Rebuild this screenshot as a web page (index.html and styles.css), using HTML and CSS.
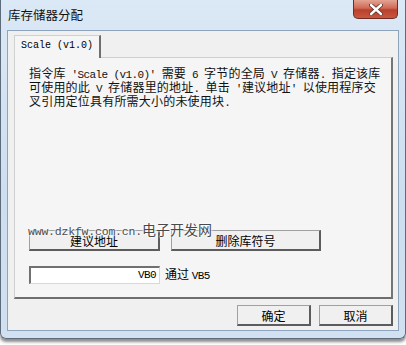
FILE: index.html
```html
<!DOCTYPE html>
<html>
<head>
    <title>库存储器分配</title>
    <link rel="stylesheet" href="styles.css">
</head>
<body>
    <div class="window">
        <div class="titlebar">
            <span class="title">库存储器分配</span>
            <div class="close-btn">
                <svg width="14" height="11" viewBox="0 0 14 11">
                    <path d="M2 1 L12 10 M12 1 L2 10" stroke="#5a2a22" stroke-width="4" stroke-linecap="round"/>
                    <path d="M2 1 L12 10 M12 1 L2 10" stroke="#fff" stroke-width="2.4" stroke-linecap="round"/>
                </svg>
            </div>
        </div>

        <div class="client">
            <div class="tabs">
                <div class="tab active">Scale (v1.0)</div>
            </div>
            <div class="panel">
                <p class="desc">
                    指令库<span class="lat"> 'Scale (v1.0)' </span>需要<span class="lat"> 6 </span>字节的全局<span class="lat"> V </span>存储器<span class="lat">. </span>指定该库<br>
                    可使用的此<span class="lat"> V </span>存储器里的地址<span class="lat">. </span>单击<span class="lat"> '</span>建议地址<span class="lat">' </span>以使用程序交<br>
                    叉引用定位具有所需大小的未使用块<span class="lat">.</span>
                </p>
                <div class="btn-row">
                    <button class="btn suggest">建议地址</button>
                    <button class="btn remove">删除库符号</button>
                </div>
                <div class="range-row">
                    <div class="field">VB0</div>
                    <span class="range-label">通过 <span class="lat">VB5</span></span>
                </div>
            </div>
            <div class="footer">
                <button class="btn footer-btn">确定</button>
                <button class="btn footer-btn">取消</button>
            </div>
        </div>

        <!-- site watermark over the dialog -->
        <div class="watermark"><span class="wm-lat">www.dzkfw.com.cn.</span>电子开发网</div>
    </div>
</body>
</html>
```

FILE: styles.css
```css
html, body {
    margin: 0;
    padding: 0;
    width: 406px;
    height: 345px;
    overflow: hidden;
    background-color: #ffffff;
    font-family: "Noto Sans CJK SC", "Liberation Sans", sans-serif;
    color: #000;
}

.window {
    position: relative;
    box-sizing: border-box;
    width: 406px;
    height: 339px;
    border: 1px solid #5d6b7a;
    border-top: none;
    border-radius: 0 0 6px 6px;
    background: linear-gradient(#dbe8f6, #cddef0 60%, #d2e1f1);
    box-shadow: 0 3px 3px rgba(0, 0, 0, 0.45);
    display: flex;
    flex-direction: column;
}

.titlebar {
    height: 30px;
    flex: none;
    display: flex;
    align-items: center;
    padding-left: 7px;
    box-sizing: border-box;
}

.title {
    font-size: 12.5px;
    line-height: 14px;
    margin-top: -1px;
    color: #111;
}

.close-btn {
    position: absolute;
    top: 0;
    right: 7px;
    width: 45px;
    height: 19px;
    box-sizing: border-box;
    border: 1px solid #6d2c24;
    border-top: none;
    border-radius: 0 0 5px 5px;
    background: linear-gradient(#e3a493, #cf6a55 45%, #b9412d 55%, #c8573f);
    display: flex;
    align-items: center;
    justify-content: center;
}

.client {
    flex: none;
    height: 301px;
    margin: 0 6px;
    box-sizing: border-box;
    border: 1px solid #8ea4bc;
    background-color: #f0f0f0;
    padding: 4px 5px 0 6px;
    display: flex;
    flex-direction: column;
}

.tabs {
    display: flex;
    height: 22px;
}

.tab {
    width: 87px;
    box-sizing: border-box;
    border: 1px solid #d0d0d0;
    border-right: 2px solid #6f6f6f;
    border-bottom: none;
    background-color: #f5f5f5;
    font-family: "Liberation Mono", monospace;
    font-size: 10px;
    line-height: 20px;
    padding-left: 6px;
    position: relative;
    z-index: 1;
    margin-bottom: -1px;
}

.panel {
    height: 242px;
    box-sizing: border-box;
    border: 1px solid #cfcfcf;
    border-right: 2px solid #757575;
    border-bottom: 2px solid #6e6e6e;
    background-color: #f5f5f5;
    padding: 9px 14px 13px 14px;
    display: flex;
    flex-direction: column;
}

.desc {
    margin: 0;
    font-size: 12px;
    line-height: 12px;
    white-space: nowrap;
    letter-spacing: 0.2px;
    color: #111;
}

.lat {
    font-family: "Liberation Mono", monospace;
    font-size: 11px;
    letter-spacing: -0.6px;
}

.btn {
    box-sizing: border-box;
    height: 21px;
    padding: 0;
    border: 1px solid #a0a0a0;
    border-right: 2px solid #5c5c5c;
    border-bottom: 2px solid #5c5c5c;
    background-color: #f0f0f0;
    font-family: "Noto Sans CJK SC", sans-serif;
    font-size: 12px;
    line-height: 17px;
    color: #000;
}

.btn-row {
    margin-top: auto;
    display: flex;
    gap: 11px;
}

.suggest {
    width: 131px;
}

.remove {
    width: 150px;
}

.range-row {
    margin-top: 15px;
    display: flex;
    align-items: center;
    gap: 5px;
    height: 18px;
}

.field {
    width: 131px;
    height: 18px;
    box-sizing: border-box;
    background-color: #fff;
    border: 1px solid #d8d8d8;
    border-top: 2px solid #707070;
    border-left: 2px solid #707070;
    font-family: "Liberation Mono", monospace;
    font-size: 11px;
    letter-spacing: -0.6px;
    line-height: 15px;
    text-align: right;
    padding-right: 3px;
}

.range-label {
    font-size: 12px;
    line-height: 16px;
}

.footer {
    display: flex;
    justify-content: flex-end;
    gap: 8px;
    margin-top: 6px;
}

.footer-btn {
    width: 74px;
}

.watermark {
    position: absolute;
    left: 27px;
    top: 220px;
    font-size: 14px;
    line-height: 18px;
    color: #4a4a4a;
    text-shadow: 0 0 2px #fff, 0 0 2px #fff, 0 0 3px #fff;
    white-space: nowrap;
}

.wm-lat {
    font-family: "Liberation Mono", monospace;
    font-size: 11.5px;
    letter-spacing: -0.2px;
}
```
